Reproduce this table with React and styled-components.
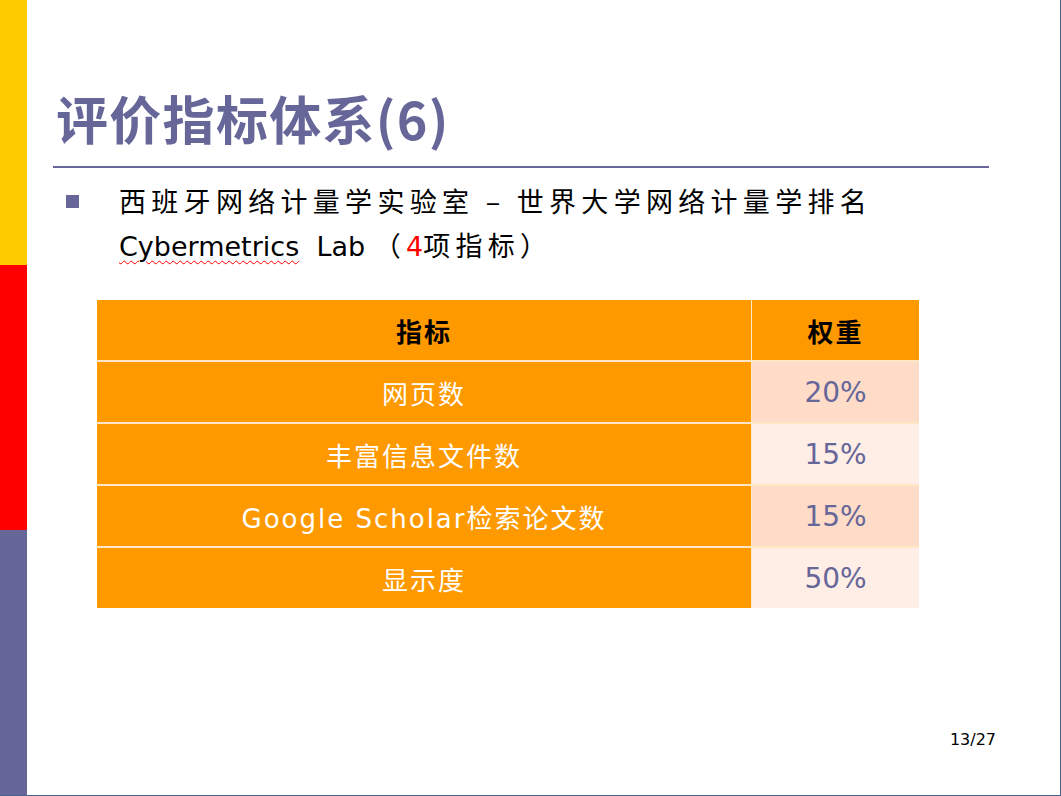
import React from 'react';
import styled, { createGlobalStyle } from 'styled-components';

const GlobalStyle = createGlobalStyle`
  html, body {
    margin: 0;
    padding: 0;
    background: #ffffff;
  }
`;

const CJK = `"Noto Sans CJK SC", sans-serif`;
const LATIN = `"DejaVu Sans", "Noto Sans CJK SC", sans-serif`;

const rows = [
  { name: '网页数', weight: '20%', shade: 'dark' },
  { name: '丰富信息文件数', weight: '15%', shade: 'light' },
  { name: 'Google Scholar检索论文数', weight: '15%', shade: 'dark' },
  { name: '显示度', weight: '50%', shade: 'light' },
];

const Slide = styled.div`
  width: 1061px;
  height: 796px;
  box-sizing: border-box;
  display: flex;
  background: #ffffff;
  border-right: 1px solid #48648c;
  border-bottom: 1px solid #48648c;
`;

const SideBar = styled.div`
  width: 27px;
  display: flex;
  flex-direction: column;
  flex-shrink: 0;
`;

const Stripe = styled.div`
  flex: 1;
  background: ${(props) => props.color};
`;

const Content = styled.div`
  flex: 1;
  display: flex;
  flex-direction: column;
  padding-top: 92px;
  position: relative;
`;

const Title = styled.h1`
  margin: 0 0 0 29px;
  font-family: ${CJK};
  font-weight: 700;
  font-size: 52px;
  line-height: 52px;
  color: #666699;
  letter-spacing: 1.3px;
`;

const Rule = styled.div`
  margin: 22px 0 0 26px;
  width: 936px;
  height: 2px;
  background: #666699;
`;

const BulletRow = styled.div`
  display: flex;
  align-items: flex-start;
  margin-top: 11px;
`;

const Bullet = styled.div`
  width: 13px;
  height: 13px;
  background: #666699;
  margin: 16px 0 0 39px;
  flex-shrink: 0;
`;

const BulletText = styled.div`
  margin-left: 40px;
  display: flex;
  flex-direction: column;
  color: #000000;
`;

const Line = styled.div`
  font-family: ${(props) => (props.latin ? LATIN : CJK)};
  font-size: 27px;
  line-height: 44px;
  letter-spacing: ${(props) => (props.latin ? '0' : '5.3px')};
  white-space: pre;
`;

const Spell = styled.span`
  text-decoration: underline wavy #ff0000;
  text-decoration-thickness: 1px;
  text-underline-offset: 4px;
`;

const Paren = styled.span`
  font-family: ${CJK};
  letter-spacing: 5.3px;
`;

const Red = styled.span`
  color: #ff0000;
  font-family: ${LATIN};
`;

const Table = styled.div`
  margin: 31px 0 0 70px;
  width: 822px;
  display: grid;
  grid-template-columns: 654px 167px;
  grid-auto-rows: 60px;
  column-gap: 1px;
  row-gap: 2px;
  background: #ffe6c4;
`;

const Cell = styled.div`
  display: flex;
  align-items: center;
  justify-content: center;
  background: ${(props) =>
    props.shade === 'dark' ? '#ffdcc8' : props.shade === 'light' ? '#ffeee6' : '#ff9900'};
  color: ${(props) => (props.head ? '#000000' : props.weight ? '#666699' : '#ffffff')};
  font-family: ${LATIN};
  font-size: ${(props) => (props.weight ? '28px' : '26px')};
  font-weight: ${(props) => (props.head ? 600 : 400)};
  letter-spacing: ${(props) => (props.weight ? '0' : '2px')};
`;

const PageNo = styled.div`
  position: absolute;
  right: 64px;
  bottom: 46px;
  font-family: "DejaVu Sans", sans-serif;
  font-size: 16px;
  color: #000000;
`;

export default function App() {
  return (
    <>
      <GlobalStyle />
      <Slide>
        <SideBar>
          <Stripe color="#ffcc00" />
          <Stripe color="#ff0000" />
          <Stripe color="#666699" />
        </SideBar>
        <Content>
          <Title>评价指标体系(6)</Title>
          <Rule />
          <BulletRow>
            <Bullet />
            <BulletText>
              <Line>西班牙网络计量学实验室 – 世界大学网络计量学排名</Line>
              <Line latin>
                <Spell>Cybermetrics</Spell>  Lab <Paren>（</Paren>
                <Red>4</Red>
                <Paren>项指标）</Paren>
              </Line>
            </BulletText>
          </BulletRow>
          <Table>
            <Cell head>指标</Cell>
            <Cell head>权重</Cell>
            {rows.map((row) => (
              <React.Fragment key={row.name}>
                <Cell>{row.name}</Cell>
                <Cell weight shade={row.shade}>
                  {row.weight}
                </Cell>
              </React.Fragment>
            ))}
          </Table>
          <PageNo>13/27</PageNo>
        </Content>
      </Slide>
    </>
  );
}
